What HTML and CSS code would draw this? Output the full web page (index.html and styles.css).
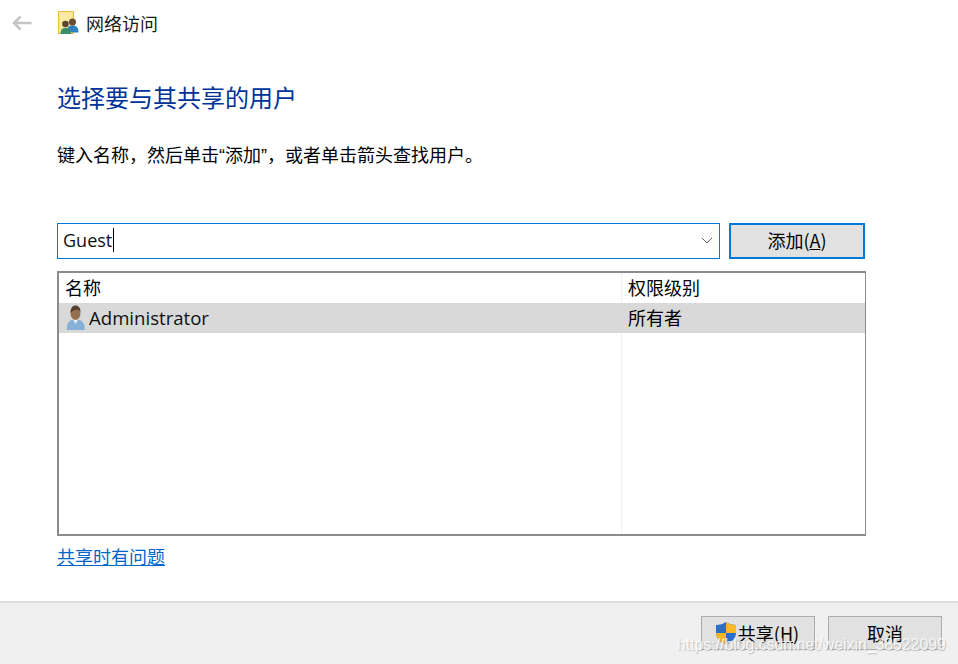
FILE: index.html
```html
<!DOCTYPE html>
<html lang="zh-CN">
<head>
<meta charset="utf-8">
<title>网络访问</title>
<link rel="stylesheet" href="styles.css">
</head>
<body>
<div class="window">
  <header class="topbar">
    <svg class="back" width="22" height="16" viewBox="0 0 22 16"><path d="M20.500 8H3M9.500 1.500 3 8l6.500 6.500" fill="none" stroke="#c4c4c4" stroke-width="2.600"/></svg>
    <svg class="appicon" width="22" height="24" viewBox="0 0 22 24">
      <rect x="0.500" y="0.500" width="15" height="22" fill="#fde38a" stroke="#e9c23f"/>
      <rect x="2" y="2" width="12" height="19" fill="#fbe9a6"/>
      <circle cx="14.500" cy="11" r="3.500" fill="#6b4a32"/>
      <path d="M9 21c0-5 2-6.500 5.500-6.500S20.500 16 20.500 21.500H9z" fill="#2f7fc4"/>
      <circle cx="7.500" cy="13" r="3.300" fill="#5d4630"/>
      <path d="M2.500 23c0-4.500 2-6 5-6s5.500 1.500 5.500 6z" fill="#3a8f6b"/>
    </svg>
    <span class="apptitle">网络访问</span>
  </header>
  <main class="content">
    <h1 class="heading">选择要与其共享的用户</h1>
    <p class="desc">键入名称，然后单击“添加”，或者单击箭头查找用户。</p>
    <div class="inputrow">
      <div class="combo">
        <span class="combotext">Guest</span><span class="caret"></span>
        <svg class="chev" width="12" height="7" viewBox="0 0 12 7"><path d="M1 1l5 5 5-5" fill="none" stroke="#606060" stroke-width="1"/></svg>
      </div>
      <button class="btn addbtn">添加(<u>A</u>)</button>
    </div>
    <div class="table">
      <div class="col col-name">
        <div class="cell">名称</div>
        <div class="cell selected">
          <svg class="usericon" width="20" height="26" viewBox="0 0 20 26">
            <path d="M1 25c-1-6 2-11 8.500-11S19.500 19 18.500 25z" fill="#86b0d6"/>
            <path d="M6.500 14l3 5 3-5z" fill="#e4eef6"/>
            <ellipse cx="9.500" cy="8" rx="5" ry="7" fill="#94704f"/>
            <path d="M4.500 8c0-5 2-7.500 5-7.500s5 2.500 5 6c-2-2.500-7-2.500-10 1.500z" fill="#52402f"/>
          </svg>
          <span>Administrator</span>
        </div>
      </div>
      <div class="col col-perm">
        <div class="cell">权限级别</div>
        <div class="cell selected">所有者</div>
      </div>
    </div>
    <a class="help" href="#">共享时有问题</a>
  </main>
  <footer class="footer">
    <button class="btn footbtn sharebtn">
      <svg class="shield" width="22" height="24" viewBox="0 0 22 24">
        <path d="M11 1c3 2 6 3 10 3v8c0 5-4 9-10 11C5 21 1 17 1 12V4c4 0 7-1 10-3z" fill="#2a6fc9"/>
        <path d="M11 1c3 2 6 3 10 3v8H11zM11 12v11C5 21 1 17 1 12z" fill="#fbb725"/>
      </svg>共享(<u>H</u>)
    </button>
    <button class="btn footbtn">取消</button>
  </footer>
  <div class="watermark">https://blog.csdn.net/weixin_38522099</div>
</div>
</body>
</html>
```
FILE: styles.css
```css
* { box-sizing: border-box; }
html, body { margin: 0; padding: 0; }
body {
  width: 958px;
  height: 664px;
  overflow: hidden;
  background: #fff;
  font-family: "Noto Sans CJK SC", "Noto Sans", sans-serif;
  color: #000;
}
.window {
  position: relative;
  width: 958px;
  height: 664px;
  display: flex;
  flex-direction: column;
}
.topbar {
  display: flex;
  align-items: center;
  height: 45px;
  padding: 0 0 0 11px;
}
.back { margin-right: 25px; }
.appicon { margin-right: 6px; }
.apptitle { font-size: 18px; line-height: 24px; color: #1a1a1a; }
.content {
  flex: 1;
  padding: 0 92px 0 57px;
  display: flex;
  flex-direction: column;
}
.heading {
  margin: 34px 0 0;
  font-size: 24px;
  line-height: 36px;
  font-weight: 400;
  color: #003399;
}
.desc {
  margin: 29px 0 0;
  font-family: "Liberation Sans", "Noto Sans CJK SC", sans-serif;
  font-size: 18px;
  line-height: 24px;
}
.inputrow {
  display: flex;
  gap: 9px;
  margin-top: 55px;
}
.combo {
  width: 663px;
  height: 36px;
  border: 1px solid #0078d7;
  display: flex;
  align-items: center;
  padding: 0 6px 2px 5px;
  font-family: "Open Sans", "Noto Sans", sans-serif;
  font-size: 18px;
}
.combotext { color: #111; }
.caret { width: 1px; height: 24px; background: #000; margin-left: 1px; }
.chev { margin-left: auto; }
.btn {
  font-family: "Noto Sans CJK SC", "Noto Sans", sans-serif;
  font-size: 18px;
  color: #000;
  background: #e1e1e1;
  padding: 0;
  display: flex;
  align-items: center;
  justify-content: center;
}
.addbtn {
  width: 136px;
  height: 36px;
  border: 2px solid #0078d7;
  padding-bottom: 2px;
}
.table {
  display: flex;
  width: 809px;
  height: 265px;
  margin-top: 12px;
  border: 2px solid #8c8c90;
  border-right-width: 1px;
}
.col { display: flex; flex-direction: column; }
.col-name { width: 562px; }
.col-perm { flex: 1; border-left: 1px solid #f0f0f0; }
.cell {
  height: 30px;
  display: flex;
  align-items: center;
  padding: 0 0 3px 6px;
  font-size: 18px;
  line-height: 24px;
  flex-shrink: 0;
}
.selected { background: #d9d9d9; }
.col-name .selected { padding: 0 0 1px 6px; }
.col-perm .selected { margin-left: -1px; padding-left: 7px; }
.usericon { margin: 0 3px 0 1px; flex-shrink: 0; }
.selected span {
  font-family: "Open Sans", "Noto Sans", sans-serif;
  color: #111;
  font-size: 18.600px;
}
.help {
  margin-top: 7px;
  align-self: flex-start;
  font-size: 18px;
  line-height: 26px;
  color: #0066cc;
}
.footer {
  height: 63px;
  background: #f0f0f0;
  border-top: 2px solid #dfdfdf;
  display: flex;
  justify-content: flex-end;
  gap: 13px;
  padding: 13px 16px 0 0;
}
.footbtn {
  width: 114px;
  height: 34px;
  border: 1px solid #adadad;
}
.sharebtn { padding-left: 6px; }
.shield { margin-right: 1px; margin-left: -8px; }
.watermark {
  position: absolute;
  left: 677px;
  top: 636px;
  font-family: "Liberation Sans", sans-serif;
  font-size: 15.800px;
  line-height: 18px;
  color: rgba(255, 255, 255, 0.85);
  text-shadow: 1px 1px 1px rgba(120, 120, 120, 0.4);
  white-space: nowrap;
}
```
